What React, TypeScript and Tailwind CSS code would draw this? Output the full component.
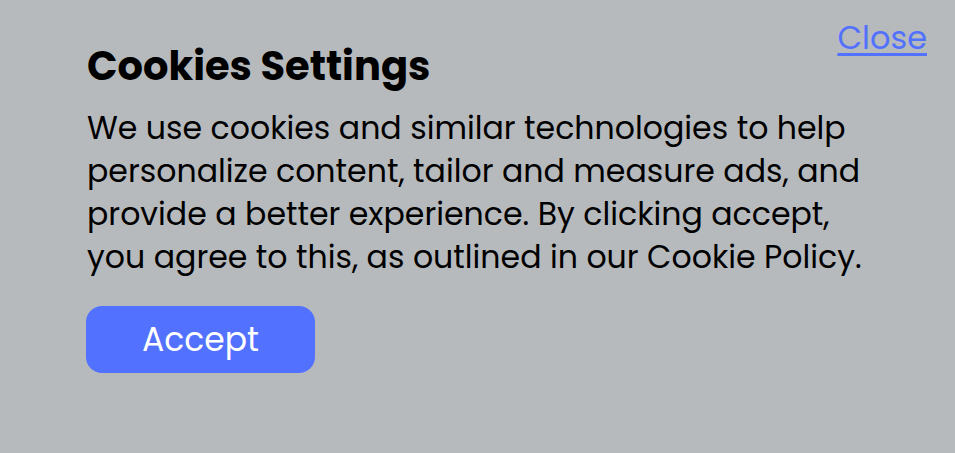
const lines = [
  'We use cookies and similar technologies to help',
  'personalize content, tailor and measure ads, and',
  'provide a better experience. By clicking accept,',
  'you agree to this, as outlined in our Cookie Policy.',
]

export default function App() {
  return (
    <div
      className="min-h-[453px] bg-[#b6babd] flex justify-between pl-[87px] pr-[28px] pt-[38px] text-black"
      style={{ fontFamily: "Poppins, 'Open Sans', Lato, sans-serif" }}
    >
      <div className="flex flex-col min-w-0">
        <h1 className="text-[40px] leading-[56px] font-bold">Cookies Settings</h1>
        <p className="mt-[13px] text-[31.6px] leading-[43px]">
          {lines.map(l => (
            <span key={l} className="block whitespace-nowrap">{l}</span>
          ))}
        </p>
        <button className="mt-[27px] -ml-[1px] w-[229px] h-[67px] rounded-[16px] bg-[#5271ff] text-white text-[33px]">
          Accept
        </button>
      </div>
      <a href="#" className="shrink-0 -mt-[25px] text-[32px] leading-[50px] text-[#5271ff] underline underline-offset-[4px]">
        Close
      </a>
    </div>
  )
}
